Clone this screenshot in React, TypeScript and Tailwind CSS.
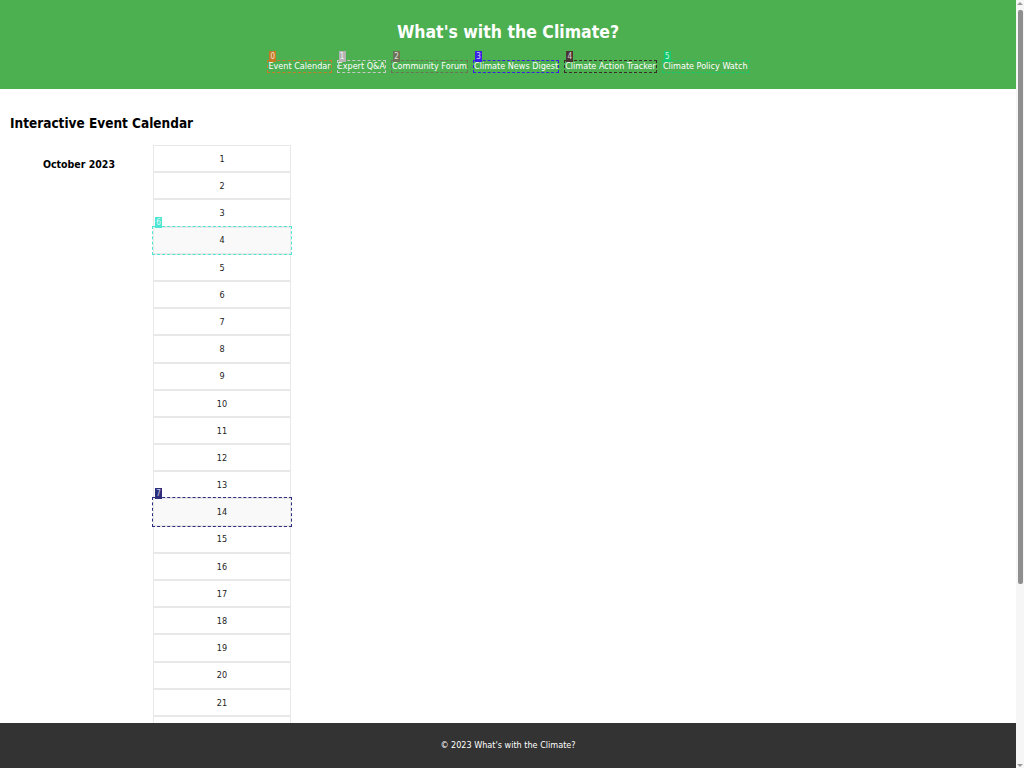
import React from 'react';

const font = { fontFamily: '"DejaVu Sans Condensed", "DejaVu Sans", sans-serif' };

const navItems = [
  { n: 0, label: 'Event Calendar', border: 'border-[#c97c2a]', badge: 'bg-[#c47a22]' },
  { n: 1, label: 'Expert Q&A', border: 'border-[#c9c9c9]', badge: 'bg-[#b3b3b3]' },
  { n: 2, label: 'Community Forum', border: 'border-[#6c7257]', badge: 'bg-[#6c7257]' },
  { n: 3, label: 'Climate News Digest', border: 'border-[#3a1fe4]', badge: 'bg-[#3a1fe4]' },
  { n: 4, label: 'Climate Action Tracker', border: 'border-[#3b2b2b]', badge: 'bg-[#4a3333]' },
  { n: 5, label: 'Climate Policy Watch', border: 'border-[#14c96c]', badge: 'bg-[#14c96c]' },
];

const days = Array.from({ length: 31 }, (_, i) => i + 1);

function Day({ d }: { d: number }) {
  if (d === 4 || d === 14) {
    const cyan = d === 4;
    return (
      <div
        className={
          cyan
            ? 'relative h-[27.2px] pt-[2px] flex items-center justify-center border border-[#e8e8e8] bg-[#f9f9f9] outline outline-dashed outline-[#4fe6d4]'
            : 'relative h-[27.2px] pt-[2px] flex items-center justify-center border border-[#e8e8e8] bg-[#f9f9f9] outline outline-dashed outline-[#2d2d7d]'
        }
      >
        <span
          className={
            cyan
              ? 'absolute left-[1px] -top-[11px] h-[11px] min-w-[7px] px-[1px] text-center bg-[#4fe6d4] text-white/80 text-[8px] leading-[11px]'
              : 'absolute left-[1px] -top-[11px] h-[11px] min-w-[7px] px-[1px] text-center bg-[#2d2d7d] text-white/80 text-[8px] leading-[11px]'
          }
        >
          {cyan ? 6 : 7}
        </span>
        {d}
      </div>
    );
  }
  return (
    <div className="h-[27.2px] pt-[2px] flex items-center justify-center border border-[#e8e8e8] bg-white">{d}</div>
  );
}

// the window's scrollbar, as it shows in the screenshot
function ScrollStrip() {
  return (
    <div className="w-[8px] shrink-0 h-screen bg-[#f6f6f6] flex flex-col items-center pt-[2px] pb-[1px]">
      <div className="w-0 h-0 border-l-[3px] border-r-[3px] border-b-[3px] border-l-transparent border-r-transparent border-b-[#9a9a9a]" />
      <div className="mt-[5px] h-[574px] w-[5px] rounded-[2px] bg-[#8e8e8e]" />
      <div className="flex-1" />
      <div className="w-0 h-0 border-l-[3px] border-r-[3px] border-t-[3px] border-l-transparent border-r-transparent border-t-[#9a9a9a]" />
    </div>
  );
}

export default function App() {
  return (
    <div style={font} className="font-stretch-condensed text-[9px] text-[#222] bg-white h-screen flex">
      <div className="flex-1 min-w-0 h-screen overflow-y-auto flex flex-col">
        {/* Header */}
        <header className="shrink-0 bg-[#4caf50] text-white text-center pt-[21px] pb-[16px]">
          <h1 className="text-[17.5px] leading-[22px] font-bold">What's with the Climate?</h1>
          <nav className="mt-[17px] flex justify-center gap-[5px]">
            {navItems.map(item => (
              <a key={item.n} href="#" className={`relative inline-block border border-dashed ${item.border} leading-[11px] text-white`}>
                <span className={`absolute left-[1px] -top-[10px] h-[11px] min-w-[7px] px-[1px] text-center ${item.badge} text-white/80 text-[8px] leading-[11px]`}>
                  {item.n}
                </span>
                {item.label}
              </a>
            ))}
          </nav>
        </header>

        {/* Calendar */}
        <main className="shrink-0 px-[10px] pb-[40px]">
          <h2 className="mt-[25px] mb-[13px] text-[13.5px] leading-[18px] font-bold text-black">Interactive Event Calendar</h2>
          <div className="grid grid-cols-7 gap-[5px]">
            <h3 className="mt-[12px] text-center text-[10.5px] leading-[15px] font-bold text-black">October 2023</h3>
            <div className="flex flex-col">
              {days.map(d => (
                <Day key={d} d={d} />
              ))}
            </div>
          </div>
        </main>

        {/* Footer */}
        <footer className="sticky bottom-0 shrink-0 h-[45px] bg-[#333] text-white flex items-center justify-center">
          © 2023 What's with the Climate?
        </footer>
      </div>
      <ScrollStrip />
    </div>
  );
}
